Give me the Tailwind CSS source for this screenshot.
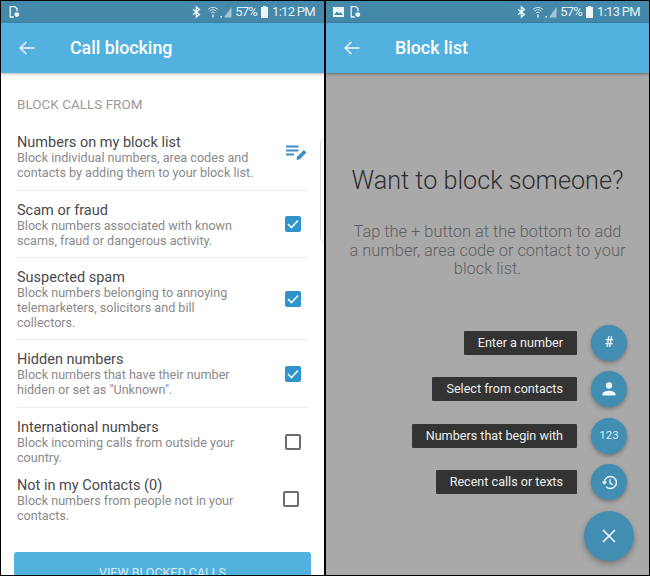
<!DOCTYPE html>
<html lang="en">
<head>
    <meta charset="UTF-8">
    <title>Call blocking</title>
    <script src="https://cdn.jsdelivr.net/npm/@tailwindcss/browser@4"></script>
</head>
<body class="bg-black">
<div class="w-[650px] h-[576px] bg-black flex gap-[2px] px-[1px] pt-[1px] pb-[1px] overflow-hidden font-['Roboto',sans-serif]">

    <!-- left phone -->
    <div class="relative w-[323px] h-[574px] bg-white overflow-hidden flex flex-col">
        <div class="h-[22px] bg-[#4488aa] flex items-center pl-[8px] pr-[9px] text-[#e6eff4] text-[13px] shrink-0">
            <svg class="w-[11px] h-[12px]" viewBox="0 0 11 12" fill="none" stroke="#eef5f8" stroke-width="1.3"><path d="M6 .7H1.2v10.3h3.6M6 .7l2 2v2.5"/><circle cx="7.8" cy="8.6" r="2.4" fill="#eef5f8" stroke="none"/></svg>
            <div class="ml-auto flex items-center">
                <svg class="w-[9px] h-[12px]" viewBox="0 0 9 12" fill="none" stroke="#eef5f8" stroke-width="1.4"><path d="M1 3.2l6.4 5.4L4.4 11V1l3 2.4L1 8.8"/></svg>
                <svg class="ml-[6px] w-[12px] h-[12px]" viewBox="0 0 12 12" fill="none" stroke="#cfdfe7" stroke-width="1"><path d="M1 3.500a7 7 0 0 1 10 0M2.600 5.200a5 5 0 0 1 6.800 0M4 7a3 3 0 0 1 4 0"/><path d="M6 8.500v3" stroke-width="1.600"/></svg>
                <svg class="ml-[1px] w-[12px] h-[12px]" viewBox="0 0 12 12"><path d="M11.500 1v10.500H4z" fill="#a9c4d2"/><path d="M.5 10h1.500v1.500H.5z" fill="#eef5f8"/></svg>
                <span class="ml-[3px] tracking-[-0.8px]">57%</span>
                <svg class="ml-[4px] w-[7px] h-[12px]" viewBox="0 0 7 12"><path d="M2 0h3v1h2v11H0V1h2z" fill="#eef5f8"/></svg>
                <span class="ml-[4px] tracking-[-0.7px]">1:12 PM</span>
            </div>
        </div>
        <div class="h-[50px] bg-[#53b1e0] flex items-center pl-[18px] shadow-[0_1px_3px_rgba(0,0,0,0.3)] z-10 shrink-0">
            <svg class="w-[16px] h-[14px]" viewBox="0 0 16 14" fill="none" stroke="#f2f9fd" stroke-width="1.500"><path d="M15.500 7H1.200M7.300 1L1.200 7l6.100 6"/></svg>
            <h1 class="ml-[35px] text-white text-[17.800px] font-medium">Call blocking</h1>
        </div>

        <div class="pl-[16px] pr-[16px] pt-[23px]">
            <h2 class="text-[#9b9b9b] text-[13.500px] leading-[16px]">BLOCK CALLS FROM</h2>

            <div class="mt-[23px] flex items-center justify-between pb-[10px] border-b border-[#ececec]">
                <div>
                    <p class="text-[14.500px] leading-[16px] text-[#4a4a4a]">Numbers on my block list</p>
                    <p class="-mt-[1px] text-[12.600px] leading-[15px] text-[#8a8a8a]">Block individual numbers, area codes and<br>contacts by adding them to your block list.</p>
                </div>
                <svg class="w-[21px] h-[15px] mr-[1px] mb-[10px]" viewBox="0 0 21 15" fill="none" stroke="#3b8fc9" stroke-width="2"><path d="M0 1.500h12.500M0 5.500h12.500M0 9.500h8"/><path d="M10.500 14.800l.4-2.900 7-7 2.600 2.600-7 7z" fill="#3b8fc9" stroke="none"/></svg>
            </div>

            <div class="pt-[12px] pb-[9px] flex items-center justify-between border-b border-[#ececec]">
                <div>
                    <p class="text-[14.500px] leading-[16px] text-[#4a4a4a]">Scam or fraud</p>
                    <p class="-mt-[1px] text-[12.600px] leading-[15px] text-[#8a8a8a]">Block numbers associated with known<br>scams, fraud or dangerous activity.</p>
                </div>
                <span class="w-[16px] h-[16px] mr-[7px] mb-[3px] rounded-[2px] bg-[#2e94cb] flex items-center justify-center">
                    <svg class="w-[12px] h-[10px]" viewBox="0 0 12 10" fill="none" stroke="#fff" stroke-width="1.600"><path d="M1 5l3.500 3.500L11 1.500"/></svg>
                </span>
            </div>

            <div class="pt-[12px] pb-[9px] flex items-center justify-between border-b border-[#ececec]">
                <div>
                    <p class="text-[14.500px] leading-[16px] text-[#4a4a4a]">Suspected spam</p>
                    <p class="-mt-[1px] text-[12.600px] leading-[15px] text-[#8a8a8a]">Block numbers belonging to annoying<br>telemarketers, solicitors and bill<br>collectors.</p>
                </div>
                <span class="w-[16px] h-[16px] mr-[7px] mb-[2px] rounded-[2px] bg-[#2e94cb] flex items-center justify-center">
                    <svg class="w-[12px] h-[10px]" viewBox="0 0 12 10" fill="none" stroke="#fff" stroke-width="1.600"><path d="M1 5l3.500 3.500L11 1.500"/></svg>
                </span>
            </div>

            <div class="pt-[12px] pb-[10px] flex items-center justify-between border-b border-[#ececec]">
                <div>
                    <p class="text-[14.500px] leading-[16px] text-[#4a4a4a]">Hidden numbers</p>
                    <p class="-mt-[1px] text-[12.600px] leading-[15px] text-[#8a8a8a]">Block numbers that have their number<br>hidden or set as "Unknown".</p>
                </div>
                <span class="w-[16px] h-[16px] mr-[7px] mb-[1px] rounded-[2px] bg-[#2e94cb] flex items-center justify-center">
                    <svg class="w-[12px] h-[10px]" viewBox="0 0 12 10" fill="none" stroke="#fff" stroke-width="1.600"><path d="M1 5l3.500 3.500L11 1.500"/></svg>
                </span>
            </div>

            <div class="pt-[12px] flex items-center justify-between">
                <div>
                    <p class="text-[14.500px] leading-[16px] text-[#4a4a4a]">International numbers</p>
                    <p class="-mt-[1px] text-[12.600px] leading-[15px] text-[#8a8a8a]">Block incoming calls from outside your<br>country.</p>
                </div>
                <span class="w-[16px] h-[16px] mr-[7px] mb-[1px] rounded-[2px] border-2 border-[#6d6d6d]"></span>
            </div>

            <div class="pt-[13px] flex items-center justify-between">
                <div>
                    <p class="text-[14.500px] leading-[16px] text-[#4a4a4a]">Not in my Contacts (0)</p>
                    <p class="-mt-[1px] text-[12.600px] leading-[15px] text-[#8a8a8a]">Block numbers from people not in your<br>contacts.</p>
                </div>
                <span class="w-[16px] h-[16px] mr-[9px] mb-[3px] rounded-[2px] border-2 border-[#6d6d6d]"></span>
            </div>
        </div>

        <div class="mt-[29px] mx-[13px] h-[40px] rounded-t-[3px] bg-[#53b1e0] text-[#d8eef9] text-[12.500px] text-center pt-[12px] shrink-0">VIEW BLOCKED CALLS</div>

        <!-- edge panel handle -->
        <div class="absolute left-[319px] top-[136px] w-[8px] h-[106px] rounded-l-[6px] border border-[#dcdcdc] bg-white"></div>
    </div>

    <!-- right phone -->
    <div class="relative w-[323px] h-[574px] bg-[#a9a9a9] overflow-hidden flex flex-col">
        <div class="h-[22px] bg-[#4488aa] flex items-center pl-[7px] pr-[9px] text-[#e6eff4] text-[13px] shrink-0">
            <svg class="w-[11px] h-[10px]" viewBox="0 0 11 10"><path d="M0 0h11v10H0z" fill="#eef5f8"/><path d="M1 8l3-3.500 2 2 1.500-1.500L10 8z" fill="#4488aa"/></svg>
            <svg class="ml-[6px] w-[11px] h-[12px]" viewBox="0 0 11 12" fill="none" stroke="#eef5f8" stroke-width="1.300"><path d="M6 .7H1.200v10.300h3.600M6 .7l2 2v2.500"/><circle cx="7.800" cy="8.600" r="2.400" fill="#eef5f8" stroke="none"/></svg>
            <div class="ml-auto flex items-center">
                <svg class="w-[9px] h-[12px]" viewBox="0 0 9 12" fill="none" stroke="#eef5f8" stroke-width="1.400"><path d="M1 3.200l6.400 5.400L4.400 11V1l3 2.400L1 8.800"/></svg>
                <svg class="ml-[6px] w-[12px] h-[12px]" viewBox="0 0 12 12" fill="none" stroke="#cfdfe7" stroke-width="1"><path d="M1 3.500a7 7 0 0 1 10 0M2.600 5.200a5 5 0 0 1 6.800 0M4 7a3 3 0 0 1 4 0"/><path d="M6 8.500v3" stroke-width="1.600"/></svg>
                <svg class="ml-[1px] w-[12px] h-[12px]" viewBox="0 0 12 12"><path d="M11.500 1v10.500H4z" fill="#a9c4d2"/><path d="M.5 10h1.500v1.500H.5z" fill="#eef5f8"/></svg>
                <span class="ml-[3px] tracking-[-0.8px]">57%</span>
                <svg class="ml-[4px] w-[7px] h-[12px]" viewBox="0 0 7 12"><path d="M2 0h3v1h2v11H0V1h2z" fill="#eef5f8"/></svg>
                <span class="ml-[4px] tracking-[-0.7px]">1:13 PM</span>
            </div>
        </div>
        <div class="h-[50px] bg-[#53b1e0] flex items-center pl-[18px] shadow-[0_1px_3px_rgba(0,0,0,0.4)] z-10 shrink-0">
            <svg class="w-[16px] h-[14px]" viewBox="0 0 16 14" fill="none" stroke="#f2f9fd" stroke-width="1.500"><path d="M15.500 7H1.200M7.300 1L1.200 7l6.100 6"/></svg>
            <h1 class="ml-[35px] text-white text-[17.800px] font-medium">Block list</h1>
        </div>

        <div class="pt-[93px] text-center">
            <h2 class="text-[25.200px] leading-[30px] font-light text-[#2f2f2f]">Want to block someone?</h2>
            <p class="mt-[27px] text-[16.400px] leading-[18.500px] font-light text-[#5f5f5f]">Tap the + button at the bottom to add<br>a number, area code or contact to your<br>block list.</p>
        </div>

        <div class="mt-[46px] pr-[22px] flex flex-col gap-[10.670px] items-end">
            <div class="flex items-center gap-[14px]">
                <span class="h-[24px] pl-[14px] pr-[14px] bg-[#333] rounded-[1px] text-[#eee] text-[12.600px] leading-[24px]">Enter a number</span>
                <span class="w-[36px] h-[36px] rounded-full bg-[#428eb2] shadow-[0_2px_4px_rgba(0,0,0,0.3)] text-[#eef6fa] text-[14px] font-medium flex items-center justify-center">#</span>
            </div>
            <div class="flex items-center gap-[14px]">
                <span class="h-[24px] pl-[14px] pr-[14px] bg-[#333] rounded-[1px] text-[#eee] text-[12.600px] leading-[24px]">Select from contacts</span>
                <span class="w-[36px] h-[36px] rounded-full bg-[#428eb2] shadow-[0_2px_4px_rgba(0,0,0,0.3)] flex items-center justify-center">
                    <svg class="w-[14px] h-[14px]" viewBox="0 0 14 14" fill="#eef6fa"><circle cx="7" cy="3.500" r="3.200"/><path d="M.5 13.500v-1.500c0-2.200 4-3.300 6.500-3.300s6.500 1.100 6.500 3.300v1.500z"/></svg>
                </span>
            </div>
            <div class="flex items-center gap-[14px]">
                <span class="h-[24px] pl-[14px] pr-[14px] bg-[#333] rounded-[1px] text-[#eee] text-[12.600px] leading-[24px]">Numbers that begin with</span>
                <span class="w-[36px] h-[36px] rounded-full bg-[#428eb2] shadow-[0_2px_4px_rgba(0,0,0,0.3)] text-[#d8e9f1] text-[11.500px] flex items-center justify-center">123</span>
            </div>
            <div class="flex items-center gap-[14px]">
                <span class="h-[24px] pl-[14px] pr-[14px] bg-[#333] rounded-[1px] text-[#eee] text-[12.600px] leading-[24px]">Recent calls or texts</span>
                <span class="w-[36px] h-[36px] rounded-full bg-[#428eb2] shadow-[0_2px_4px_rgba(0,0,0,0.3)] flex items-center justify-center">
                    <svg class="w-[16px] h-[15px]" viewBox="0 0 16 15" fill="none" stroke="#eef6fa" stroke-width="1.500"><path d="M3.400 7.500a6 6 0 1 1 1.800 4.300"/><path d="M0.700 6.800h5.300L3.400 9.800z" fill="#eef6fa" stroke="none"/><path d="M9 4v4l2.800 1.600" stroke-width="1.300"/></svg>
                </span>
            </div>
        </div>

        <!-- close button -->
        <div class="absolute left-[258px] top-[510px] w-[50px] h-[50px] rounded-full bg-[#428eb2] shadow-[0_3px_6px_rgba(0,0,0,0.3)] flex items-center justify-center">
            <svg class="w-[14px] h-[14px]" viewBox="0 0 14 14" fill="none" stroke="#f2f9fd" stroke-width="1.700"><path d="M1 1l12 12M13 1L1 13"/></svg>
        </div>
    </div>
</div>
</body>
</html>
